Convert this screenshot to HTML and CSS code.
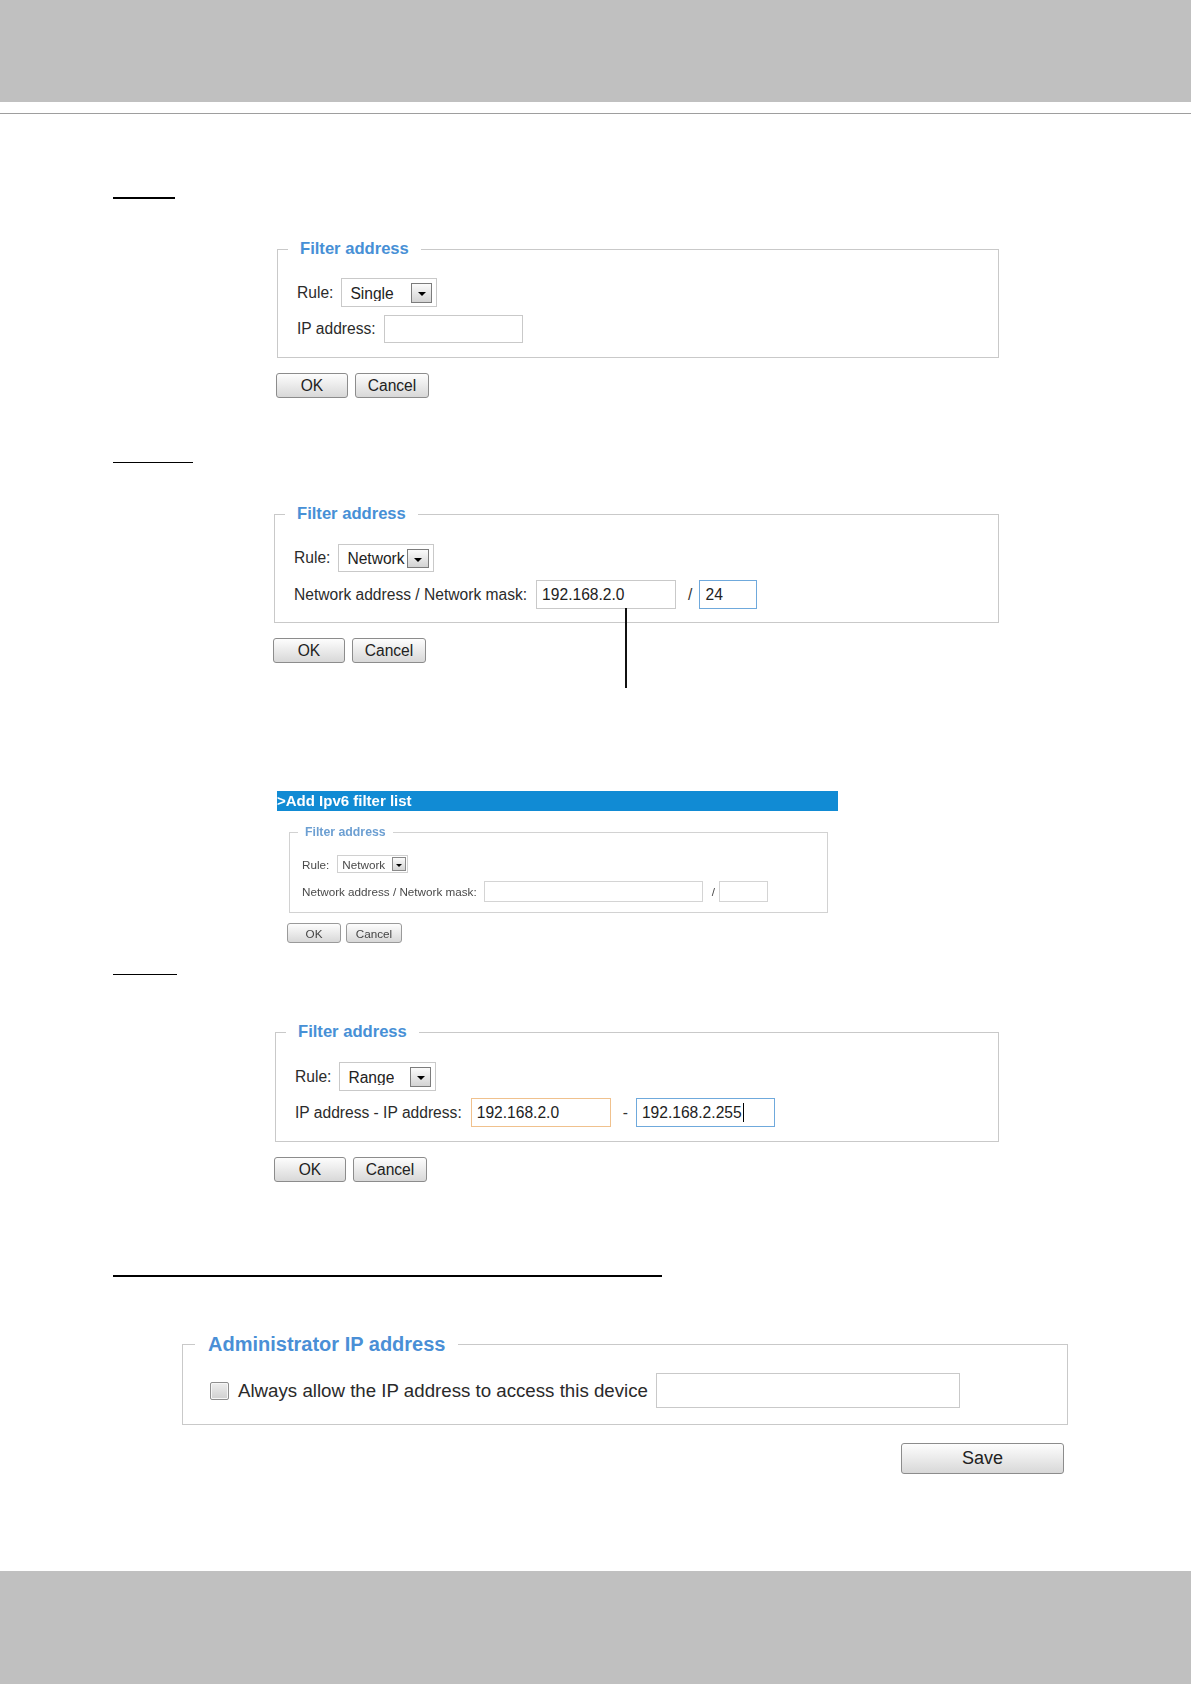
FILE: index.html
```html
<!DOCTYPE html>
<html lang="en">
<head>
<meta charset="utf-8">
<title>Filter address</title>
<link rel="stylesheet" href="styles.css">
</head>
<body>
<div class="page">
  <header class="top-band"></header>
  <div class="top-rule"></div>

  <main class="content">
    <!-- Single -->
    <div class="hl hl-1"></div>
    <section class="block">
      <fieldset class="filter f-1">
        <legend class="lg">Filter address</legend>
        <div class="rows">
          <div class="row">
            <span class="lbl">Rule:</span>
            <div class="select s-1"><span class="sel-text">Single</span><span class="arrow"></span></div>
          </div>
          <div class="row">
            <span class="lbl">IP address:</span>
            <div class="field w-139 h-28"></div>
          </div>
        </div>
      </fieldset>
      <div class="btns b-1"><button class="btn b-ok">OK</button><button class="btn b-cancel">Cancel</button></div>
    </section>

    <!-- Network -->
    <div class="hl hl-2"></div>
    <section class="block">
      <fieldset class="filter f-2">
        <legend class="lg">Filter address</legend>
        <div class="rows">
          <div class="row">
            <span class="lbl">Rule:</span>
            <div class="select s-2"><span class="sel-text">Network</span><span class="arrow a-2"></span></div>
          </div>
          <div class="row">
            <span class="lbl lbl-net">Network address / Network mask:</span>
            <div class="field w-140 h-29 pointer">192.168.2.0<span class="callout"></span></div>
            <span class="sep sep-slash">/</span>
            <div class="field w-58 h-29 focus-blue">24</div>
          </div>
        </div>
      </fieldset>
      <div class="btns b-2"><button class="btn b-ok">OK</button><button class="btn b-cancel">Cancel</button></div>
    </section>

    <!-- IPv6 screenshot -->
    <section class="shot">
      <div class="shot-bar"><span class="shot-title">&gt;Add Ipv6 filter list</span></div>
      <fieldset class="filter f-3">
        <legend class="lg lg-small">Filter address</legend>
        <div class="rows rows-small">
          <div class="row">
            <span class="lbl small">Rule:</span>
            <div class="select s-3"><span class="sel-text-small">Network</span><span class="arrow a-3"></span></div>
          </div>
          <div class="row">
            <span class="lbl small lbl-net-small">Network address / Network mask:</span>
            <div class="field w-219 h-21"></div>
            <span class="sep small sep-slash-small">/</span>
            <div class="field w-49 h-21"></div>
          </div>
        </div>
      </fieldset>
      <div class="btns b-3"><button class="btn small-btn sb-ok">OK</button><button class="btn small-btn sb-cancel">Cancel</button></div>
    </section>

    <!-- Range -->
    <div class="hl hl-4"></div>
    <section class="block">
      <fieldset class="filter f-4">
        <legend class="lg">Filter address</legend>
        <div class="rows rows-4">
          <div class="row">
            <span class="lbl">Rule:</span>
            <div class="select s-4"><span class="sel-text">Range</span><span class="arrow"></span></div>
          </div>
          <div class="row">
            <span class="lbl lbl-range">IP address - IP address:</span>
            <div class="field w-140 h-29 focus-orange">192.168.2.0</div>
            <span class="sep sep-dash">-</span>
            <div class="field w-139 h-29 focus-blue">192.168.2.255<span class="caret"></span></div>
          </div>
        </div>
      </fieldset>
      <div class="btns b-4"><button class="btn b-ok">OK</button><button class="btn b-cancel">Cancel</button></div>
    </section>

    <!-- Administrator IP address -->
    <div class="hl hl-5"></div>
    <section class="admin">
      <fieldset class="filter f-5">
        <legend class="lg lg-big">Administrator IP address</legend>
        <div class="rows rows-5">
          <div class="row">
            <span class="check"></span>
            <span class="lbl big">Always allow the IP address to access this device</span>
            <div class="field w-304 h-35"></div>
          </div>
        </div>
      </fieldset>
      <div class="save-row"><button class="btn save">Save</button></div>
    </section>
  </main>

  <footer class="bottom-band"></footer>
</div>
</body>
</html>
```

FILE: styles.css
```css
* { box-sizing: border-box; }

body {
  margin: 0;
  background: #fff;
  color: #2b2b2b;
  font-family: "Liberation Sans", Arial, sans-serif;
}

.page {
  min-height: 1684px;
  display: flex;
  flex-direction: column;
}

.top-band { height: 102px; background: #c0c0c0; }
.top-rule { margin-top: 11px; height: 1px; background: #9e9e9e; }
.content { display: flex; flex-direction: column; align-items: flex-start; }
.bottom-band { margin-top: auto; height: 113px; background: #c0c0c0; }

/* heading underlines */
.hl { margin-left: 113px; border-top: 2px solid #000; }
.hl-1 { margin-top: 83px; width: 62px; }
.hl-2 { margin-top: 64px; width: 80px; border-top-width: 1px; }
.hl-4 { margin-top: 31px; width: 64px; border-top-width: 1px; }
.hl-5 { margin-top: 93px; width: 549px; }

/* fieldsets */
.filter {
  margin: 0;
  min-width: 0;
  border: 1px solid #c9c9c9;
  padding: 19px 0 14px 10px;
}
.lg {
  padding: 0 12px;
  font-weight: bold;
  font-size: 16.6px;
  line-height: 20px;
  color: #4790d6;
}
.lg-small { padding: 0 7px; font-size: 12.3px; line-height: 14px; color: #6c9fd2; }
.lg-big { padding: 0 13px; font-size: 20px; line-height: 24px; color: #4a8fd6; }

.f-1 { margin-top: 40px; margin-left: 277px; width: 722px; }
.f-2 { margin-top: 41px; margin-left: 274px; width: 725px; padding-top: 20px; padding-bottom: 13px; }
.f-3 { margin-top: 14px; margin-left: 12px; width: 539px; padding: 16px 0 10px 8px; border-color: #d2d2d2; }
.f-4 { margin-top: 47px; margin-left: 275px; width: 724px; padding-top: 20px; padding-bottom: 14px; }
.f-5 { margin-top: 55px; width: 886px; padding: 17px 0 16px 12px; }

.rows { display: flex; flex-direction: column; gap: 8px; padding-left: 9px; }
.rows-4 { gap: 7px; }
.rows-small { padding-left: 4px; }
.rows-5 { padding-left: 15px; }

.row { display: flex; align-items: center; }

.lbl { font-size: 15.6px; color: #2b2b2b; margin-right: 8px; white-space: nowrap; }
.lbl-net { margin-right: 9px; }
.lbl-range { margin-right: 9px; }
.lbl.small { font-size: 11.7px; color: #4a4a4a; }
.lbl-net-small { margin-right: 7px; }
.lbl.big { font-size: 18.7px; color: #2a2a2a; margin-right: 8px; }

/* select */
.select {
  display: flex;
  justify-content: space-between;
  align-items: center;
  background: #fff;
  border: 1px solid #c9c9c9;
  padding: 0 4px 0 8px;
}
.s-1 { width: 96px; height: 29px; }
.s-2 { width: 96px; height: 28px; }
.s-4 { width: 97px; height: 29px; }
.s-3 { width: 71px; height: 18px; padding: 0 1px 0 4px; border-color: #d0d0d0; }

.sel-text {
  align-self: flex-start;
  margin-top: 6px;
  height: 16px;
  overflow: hidden;
  font-size: 15.6px;
  line-height: 18px;
  color: #222;
}
.s-2 .sel-text { margin-top: 5px; height: 18px; }
.sel-text-small { font-size: 11.7px; color: #4a4a4a; }

.arrow {
  width: 21px;
  height: 20px;
  border: 1px solid #7c7c7c;
  background: linear-gradient(#fbfbfb, #d3d3d3);
  display: flex;
  align-items: center;
  justify-content: center;
}
.arrow::after {
  content: "";
  margin-top: 3px;
  border-left: 4px solid transparent;
  border-right: 4px solid transparent;
  border-top: 4px solid #000;
}
.a-2 { width: 22px; height: 19px; }
.a-3 { width: 14px; height: 14px; border-color: #8a8a8a; }
.a-3::after { margin-top: 2px; border-left-width: 3px; border-right-width: 3px; border-top-width: 3px; }

/* text fields */
.field {
  display: flex;
  align-items: center;
  background: #fff;
  border: 1px solid #c9c9c9;
  padding: 0 5px;
  font-size: 15.6px;
  color: #222;
  white-space: nowrap;
}
.w-139 { width: 139px; }
.w-140 { width: 140px; }
.w-58 { width: 58px; }
.w-219 { width: 219px; }
.w-49 { width: 49px; }
.w-304 { width: 304px; }
.h-28 { height: 28px; }
.h-29 { height: 29px; }
.h-21 { height: 21px; border-color: #d4d4d4; }
.h-35 { height: 35px; }

.focus-blue { border-color: #6fa9dc; }
.focus-orange { border-color: #f0c18d; }

.pointer { position: relative; }
.callout {
  position: absolute;
  left: 88px;
  top: 100%;
  width: 2px;
  height: 80px;
  background: #111;
}

.caret { display: inline-block; width: 1px; height: 19px; background: #000; margin-left: 1px; }

.sep { font-size: 15.6px; color: #333; }
.sep-slash { margin: 0 7px 0 12px; }
.sep-dash { margin: 0 8px 0 12px; }
.sep.small { font-size: 11.7px; color: #4a4a4a; }
.sep-slash-small { margin: 0 4px 0 9px; }

/* buttons */
.btns { display: flex; gap: 7px; margin-top: 15px; }
.b-1 { margin-left: 276px; }
.b-2 { margin-left: 273px; }
.b-4 { margin-left: 274px; }
.b-3 { margin-left: 10px; margin-top: 10px; gap: 5px; }

.btn {
  height: 25px;
  padding: 0;
  border: 1px solid #8c8c8c;
  border-radius: 3px;
  background: linear-gradient(#fdfdfd, #d8d8d8);
  font-family: "Liberation Sans", Arial, sans-serif;
  font-size: 15.6px;
  color: #222;
}
.b-ok { width: 72px; }
.b-cancel { width: 74px; }
.small-btn { height: 20px; font-size: 11.7px; color: #444; border-color: #9a9a9a; }
.sb-ok { width: 54px; }
.sb-cancel { width: 56px; }

/* ipv6 screenshot */
.shot {
  margin-top: 128px;
  margin-left: 277px;
  width: 561px;
  filter: blur(0.4px);
}
.shot-bar {
  height: 20px;
  background: #118bd4;
  white-space: nowrap;
}
.shot-title {
  display: block;
  font-weight: bold;
  font-size: 15px;
  line-height: 20px;
  color: #fff;
}

/* admin */
.admin { margin-left: 182px; }
.check {
  width: 19px;
  height: 18px;
  margin-right: 9px;
  border: 1px solid #8e8e8e;
  border-radius: 2px;
  background: linear-gradient(#ededed, #d0d0d0);
  box-shadow: inset 0 0 0 1px #f6f6f6;
}
.save-row { width: 886px; display: flex; justify-content: flex-end; padding-right: 4px; margin-top: 18px; }
.save { width: 163px; height: 31px; font-size: 18px; }
```
